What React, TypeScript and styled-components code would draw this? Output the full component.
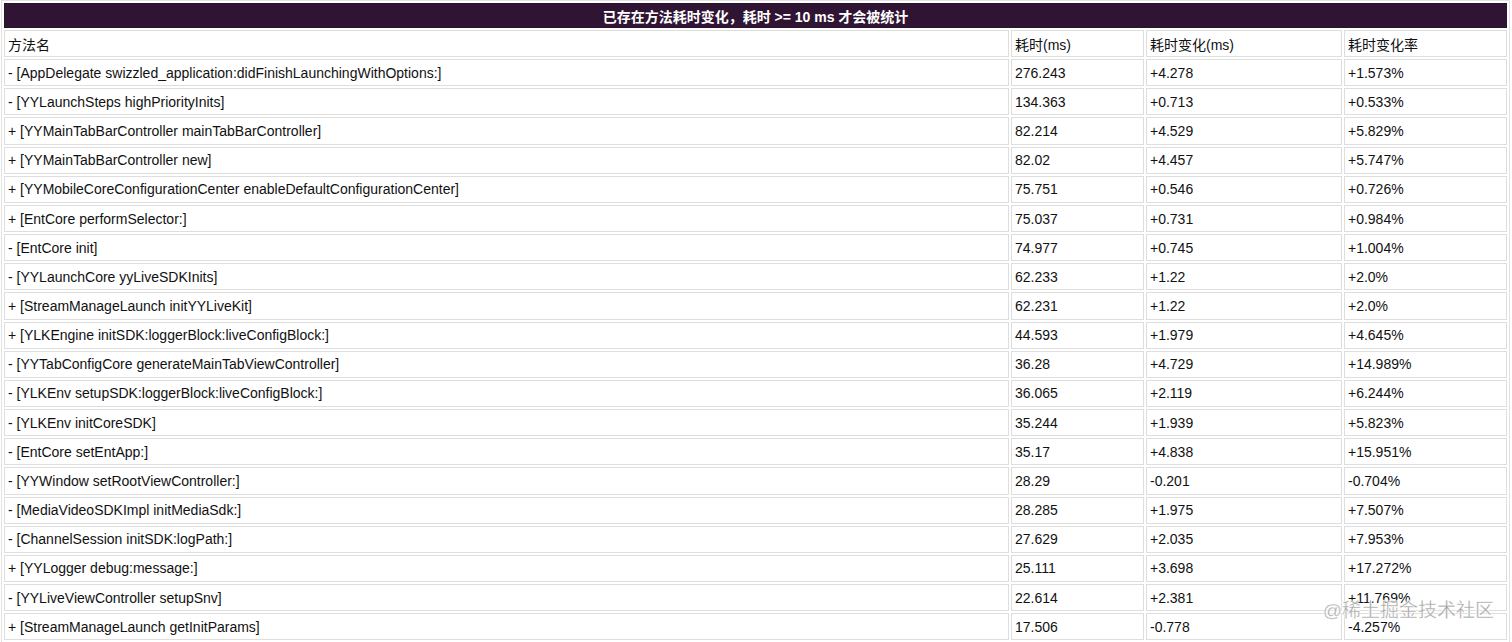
import React from 'react'
import styled, { createGlobalStyle } from 'styled-components'

const GlobalStyle = createGlobalStyle`
  html, body {
    margin: 0;
    padding: 0;
    background: #fff;
    overflow: hidden;
  }
  body {
    font-family: "Liberation Sans", Arial, "Noto Sans CJK SC", sans-serif;
    font-size: 14px;
    color: #111;
  }
`

const Page = styled.div`
  position: relative;
  width: 1512px;
  height: 642px;
  overflow: hidden;
`

const Table = styled.table`
  width: 1509px;
  margin-left: 1px;
  table-layout: fixed;
  border-collapse: separate;
  border-spacing: 2px;
  border: 1px solid #e2e2e2;
`

const Col = styled.col<{ $w?: number }>`
  width: ${p => (p.$w ? `${p.$w}px` : 'auto')};
`

const Title = styled.th`
  height: 25px;
  padding: 0;
  background: #2f1533;
  color: #fff;
  font-weight: bold;
  font-size: 14px;
  text-align: center;
  border: 1px solid #2a1230;
  box-sizing: border-box;
`

const Cell = styled.td`
  height: 27.17px;
  padding: 0 3px;
  border: 1px solid #dedede;
  box-sizing: border-box;
  white-space: nowrap;
  overflow: hidden;
  text-align: left;
  vertical-align: middle;
`

const Watermark = styled.div`
  position: absolute;
  right: 18px;
  bottom: 20px;
  font-size: 19px;
  color: rgba(150, 150, 150, 0.85);
  -webkit-text-stroke: 0.3px #fff;
  text-shadow: 0 0 2px #fff, 0 0 2px #fff;
  pointer-events: none;
`

type Row = [string, string, string, string]

const rows: Row[] = [
  ['- [AppDelegate swizzled_application:didFinishLaunchingWithOptions:]', '276.243', '+4.278', '+1.573%'],
  ['- [YYLaunchSteps highPriorityInits]', '134.363', '+0.713', '+0.533%'],
  ['+ [YYMainTabBarController mainTabBarController]', '82.214', '+4.529', '+5.829%'],
  ['+ [YYMainTabBarController new]', '82.02', '+4.457', '+5.747%'],
  ['+ [YYMobileCoreConfigurationCenter enableDefaultConfigurationCenter]', '75.751', '+0.546', '+0.726%'],
  ['+ [EntCore performSelector:]', '75.037', '+0.731', '+0.984%'],
  ['- [EntCore init]', '74.977', '+0.745', '+1.004%'],
  ['- [YYLaunchCore yyLiveSDKInits]', '62.233', '+1.22', '+2.0%'],
  ['+ [StreamManageLaunch initYYLiveKit]', '62.231', '+1.22', '+2.0%'],
  ['+ [YLKEngine initSDK:loggerBlock:liveConfigBlock:]', '44.593', '+1.979', '+4.645%'],
  ['- [YYTabConfigCore generateMainTabViewController]', '36.28', '+4.729', '+14.989%'],
  ['- [YLKEnv setupSDK:loggerBlock:liveConfigBlock:]', '36.065', '+2.119', '+6.244%'],
  ['- [YLKEnv initCoreSDK]', '35.244', '+1.939', '+5.823%'],
  ['- [EntCore setEntApp:]', '35.17', '+4.838', '+15.951%'],
  ['- [YYWindow setRootViewController:]', '28.29', '-0.201', '-0.704%'],
  ['- [MediaVideoSDKImpl initMediaSdk:]', '28.285', '+1.975', '+7.507%'],
  ['- [ChannelSession initSDK:logPath:]', '27.629', '+2.035', '+7.953%'],
  ['+ [YYLogger debug:message:]', '25.111', '+3.698', '+17.272%'],
  ['- [YYLiveViewController setupSnv]', '22.614', '+2.381', '+11.769%'],
  ['+ [StreamManageLaunch getInitParams]', '17.506', '-0.778', '-4.257%'],
]

const App: React.FC = () => {
  return (
    <Page>
      <GlobalStyle />
      <Table>
        <colgroup>
          <Col />
          <Col $w={133} />
          <Col $w={196} />
          <Col $w={163} />
        </colgroup>
        <tbody>
          <tr>
            <Title colSpan={4}>已存在方法耗时变化，耗时 &gt;= 10 ms 才会被统计</Title>
          </tr>
          <tr>
            <Cell>方法名</Cell>
            <Cell>耗时(ms)</Cell>
            <Cell>耗时变化(ms)</Cell>
            <Cell>耗时变化率</Cell>
          </tr>
          {rows.map(r => (
            <tr key={r[0]}>
              {r.map((v, i) => (
                <Cell key={i}>{v}</Cell>
              ))}
            </tr>
          ))}
        </tbody>
      </Table>
      <Watermark>@稀土掘金技术社区</Watermark>
    </Page>
  )
}

export default App
